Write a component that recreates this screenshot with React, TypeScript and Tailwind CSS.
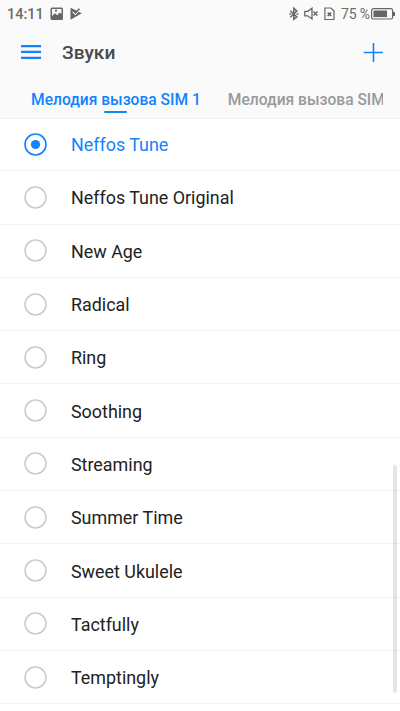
import clsx from 'clsx';

const TABS = ['Мелодия вызова SIM 1', 'Мелодия вызова SIM 2'];

const TUNES = [
  'Neffos Tune',
  'Neffos Tune Original',
  'New Age',
  'Radical',
  'Ring',
  'Soothing',
  'Streaming',
  'Summer Time',
  'Sweet Ukulele',
  'Tactfully',
  'Temptingly',
];

function StatusBar() {
  return (
    <div className="flex h-[27px] shrink-0 items-center pl-[7px] pr-[5px] text-[#6b6b6b]">
      <span className="w-[43px] pt-[3px] text-[14.5px] font-medium leading-none">14:11</span>
      <svg className="h-[14px] w-[14px]" viewBox="0 0 14 14">
        <rect x="0.5" y="0.5" width="12.5" height="12.5" rx="1.5" fill="#666" />
        <path d="M2 2h9.5v5L9.5 5.5 7.3 8.2 5 6.2 2 9z" fill="#fafafa" />
        <path d="M5 2.8h2v1.8H5z" fill="#666" />
      </svg>
      <svg className="ml-[6px] h-[14px] w-[13px]" viewBox="0 0 13 14">
        <path d="M0.5 0.8L11.8 6.3 0.5 12.8z" fill="#666" />
        <path d="M2.6 4.6L5.3 7.4 10.5 2.2" fill="none" stroke="#fafafa" strokeWidth="1.1" />
        <path d="M3.5 3.7L5.6 5.7 9.5 1.8" fill="none" stroke="#666" strokeWidth="1.6" />
      </svg>
      <div className="ml-auto flex items-center">
        <svg className="h-[14px] w-[10px]" viewBox="0 0 10 14" fill="none" stroke="#666" strokeWidth="1.5">
          <path d="M1.3 3.8L7.8 10 4.8 12.3V1.2l3 2.8-6.5 6.2" />
          <path d="M0.4 7h1.8M7.6 7h1.8" />
        </svg>
        <svg className="ml-[5px] h-[14px] w-[15px]" viewBox="0 0 15 14" fill="none" stroke="#666" strokeWidth="1.3">
          <path d="M0.8 4.3h3L8 1.2v10.8L3.8 8.8h-3z" />
          <path d="M9.5 4.4l4 4M13.5 4.4l-4 4" strokeWidth="1.4" />
        </svg>
        <svg className="ml-[5px] h-[14px] w-[11px]" viewBox="0 0 11 14" fill="none" stroke="#666" strokeWidth="1.2">
          <path d="M0.9 1h6L10 4.1v8.400H0.9z" />
          <path d="M3.7 5.6l3.4 3.4M7.1 5.6L3.700 9" strokeWidth="1.6" />
        </svg>
        <span className="ml-[6px] w-[30px] whitespace-nowrap text-[14px] leading-none [word-spacing:-0.5px]">75 %</span>
        <svg className="h-[12px] w-[24px]" viewBox="0 0 24 12">
          <rect x="0.6" y="0.6" width="21" height="10.4" rx="1.8" fill="none" stroke="#666" strokeWidth="1.2" />
          <rect x="2.5" y="2.5" width="13.5" height="6.6" fill="#666" />
          <rect x="22" y="4" width="2" height="4" fill="#666" />
        </svg>
      </div>
    </div>
  );
}

function AppBar() {
  return (
    <div className="flex h-[50px] shrink-0 items-center pl-[21px] pr-[17px]">
      <svg className="h-[14px] w-5" viewBox="0 0 20 14" fill="#1283fd">
        <path d="M0 0h20v2.2H0zM0 5.8h20V8H0zM0 11.800h20v2.200H0z" />
      </svg>
      <h1 className="ml-[21px] pt-[2px] text-[19.2px] font-medium leading-none text-[#4a4a4a]">Звуки</h1>
      <svg className="ml-auto h-5 w-5" viewBox="0 0 20 20" fill="none" stroke="#1283fd" strokeWidth="1.6">
        <path d="M0.8 10.500h19M10.500 1v19" />
      </svg>
    </div>
  );
}

function Tabs() {
  return (
    <div className="h-[42px] shrink-0 border-b border-[#f1f1f1] pl-[31px] pr-[17.5px]">
      <div className="flex gap-[27px] overflow-hidden">
        {TABS.map((tab, i) => (
          <div key={tab} className="flex shrink-0 flex-col items-center">
            <span
              className={clsx(
                'mt-[12.5px] whitespace-nowrap text-[15.6px] font-medium leading-[20px]',
                i === 0 ? 'text-[#1283fd]' : 'text-[#999]',
              )}
            >
              {tab}
            </span>
            {i === 0 && <span className="mt-[1.5px] h-[2px] w-[23px] rounded-full bg-[#1283fd]" />}
          </div>
        ))}
      </div>
    </div>
  );
}

function Radio({ checked }: { checked: boolean }) {
  return (
    <svg className="h-[23px] w-[23px]" viewBox="0 0 23 23">
      <circle cx="11.5" cy="11.5" r="10.5" fill="none" stroke={checked ? '#1283fd' : '#ccc'} strokeWidth="1.6" />
      {checked && <circle cx="11.5" cy="11.5" r="4.6" fill="#1283fd" />}
    </svg>
  );
}

function TuneRow({ name, selected }: { name: string; selected: boolean }) {
  return (
    <div className="flex h-[53.3px] shrink-0 items-center border-b border-[#f1f1f1] pl-6">
      <Radio checked={selected} />
      <span className={clsx('ml-6 pt-[2px] text-[17.9px] leading-none', selected ? 'text-[#1283fd]' : 'text-[#222]')}>
        {name}
      </span>
    </div>
  );
}

export default function App() {
  return (
    <div className="relative flex h-[711px] w-[400px] flex-col overflow-hidden bg-white font-[Roboto,sans-serif]">
      <header className="bg-[#fafafa]">
        <StatusBar />
        <AppBar />
        <Tabs />
      </header>
      <main className="-mt-px flex flex-col">
        {TUNES.map((name, i) => (
          <TuneRow key={name} name={name} selected={i === 0} />
        ))}
      </main>
      {/* scroll thumb floats over the list */}
      <div className="absolute right-[3px] top-[465px] h-[228px] w-1 rounded-full bg-black/10" />
    </div>
  );
}
